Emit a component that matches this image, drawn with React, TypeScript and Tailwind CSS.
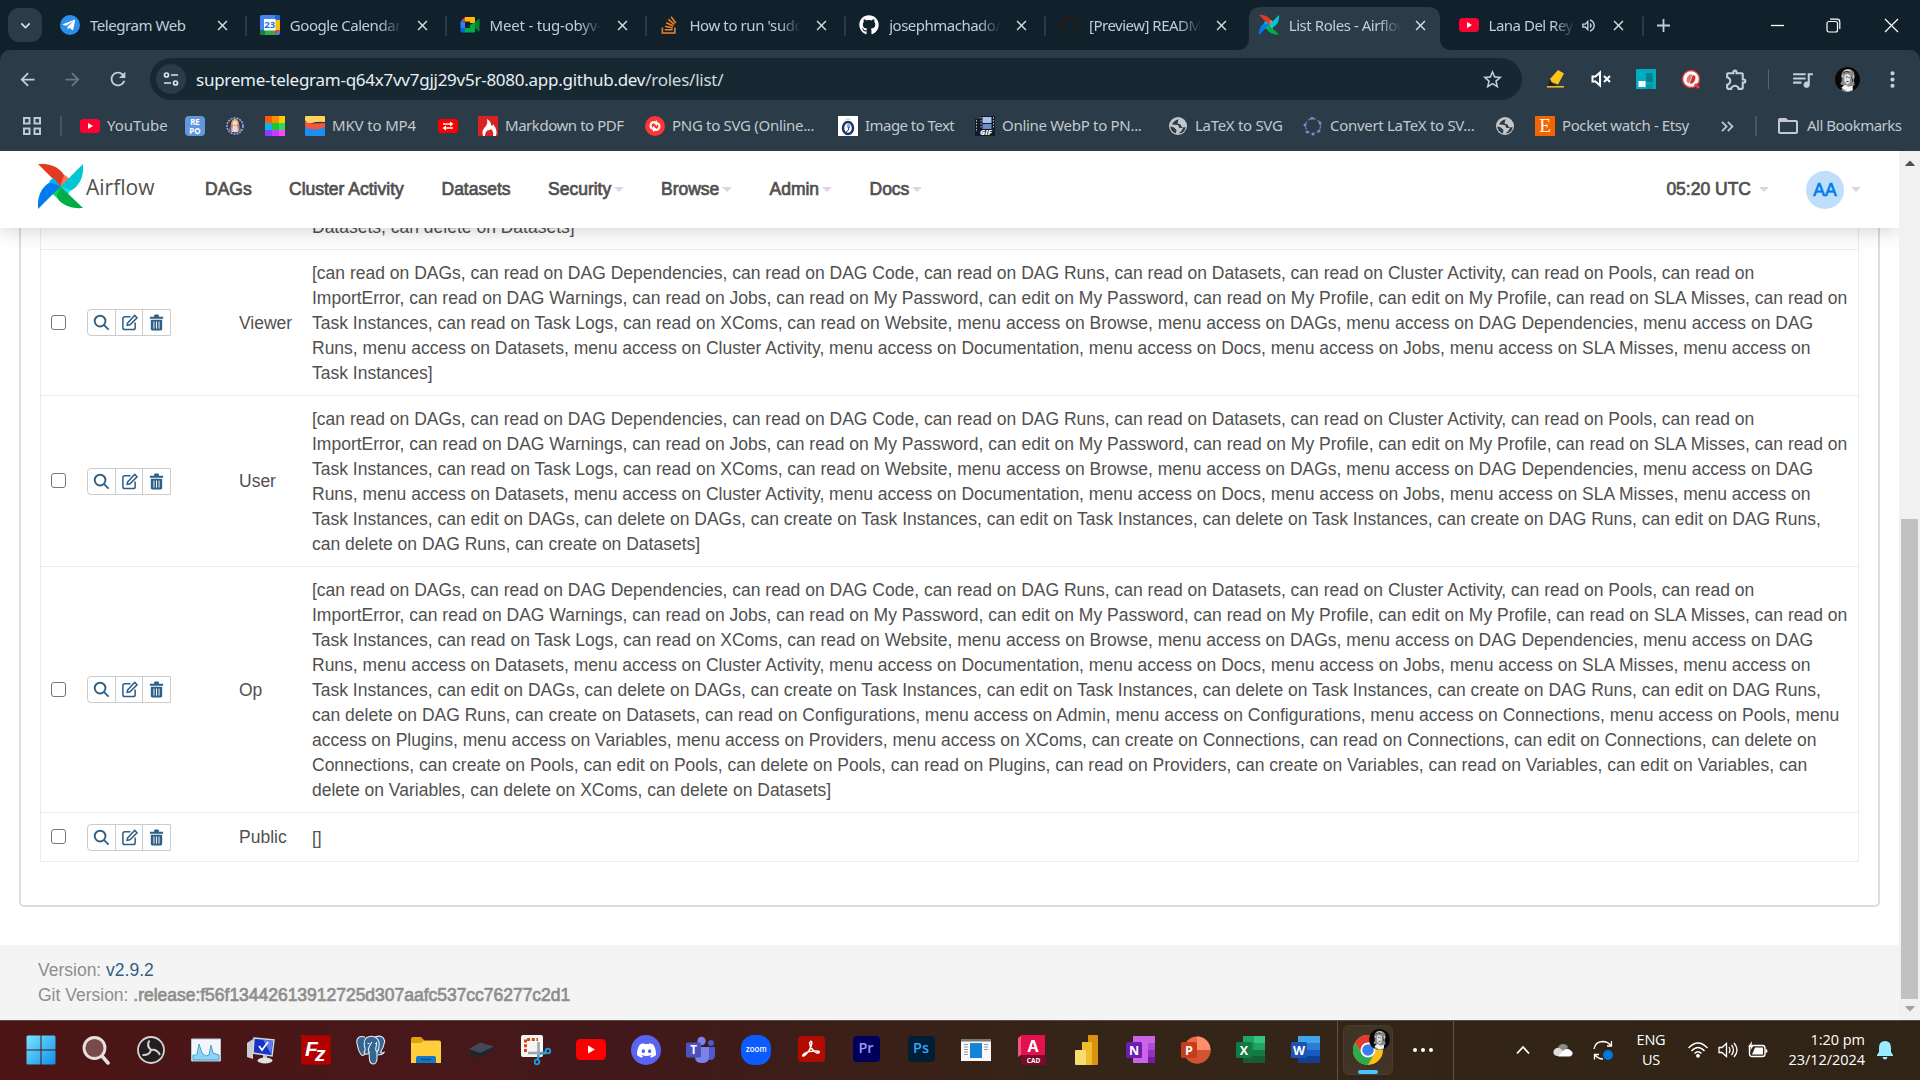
import React from "react";
import { FaGithub, FaTelegramPlane, FaStackOverflow, FaCaretDown, FaCaretUp } from "react-icons/fa";
import { SiDiscord } from "react-icons/si";
import {
  MdArrowBack,
  MdArrowForward,
  MdRefresh,
  MdStarBorder,
  MdOutlineExtension,
  MdQueueMusic,
  MdMoreVert,
  MdFolderOpen,
  MdClose,
  MdKeyboardArrowDown,
  MdKeyboardDoubleArrowRight,
  MdOutlineVolumeUp,
} from "react-icons/md";

const AirflowMark = ({ className }: { className: string }) => (
  <svg viewBox="0 0 46 46" className={className}>
    <path d="M0 0C12-1 22 3 27 12c2 4 0 8-4 11L0 0Z" fill="#e43921" />
    <path d="M27 11c3 2 5 4 5 5L23 23c1-4 2-8 4-12Z" fill="#ff7557" />
    <path d="M46 0c1 12-3 22-12 27-4 1-8 0-11-4L46 0Z" fill="#00c7d4" />
    <path d="M33 27c-2 4-4 6-5 7l-5-11c4 1 7 2 10 4Z" fill="#11e1ee" />
    <path d="M46 45c-12 1-22-3-27-11-1-5 0-8 4-11l23 22Z" fill="#00ad46" />
    <path d="M19 34c-3-2-5-4-6-5l10-6c-2 3-3 7-4 11Z" fill="#04d659" />
    <path d="M0 46c-1-12 3-22 12-27 5-1 8 0 11 4L0 46Z" fill="#017cee" />
    <path d="M11 19c1-2 3-4 5-5l7 9c-4-2-8-3-12-4Z" fill="#00b3ee" />
  </svg>
);

const YouTubeIcon = ({ className }: { className: string }) => (
  <svg viewBox="0 0 20 14" className={className}>
    <rect width="20" height="14" rx="3.500" fill="#ff0033" />
    <path d="M8 4l5 3-5 3z" fill="#fff" />
  </svg>
);

const CalendarIcon = () => (
  <svg viewBox="0 0 20 20" className="size-5">
    <rect width="20" height="20" rx="2" fill="#4285f4" />
    <path d="M15 5h5v10h-5z" fill="#fbbc04" />
    <path d="M5 15h10v5H5z" fill="#34a853" />
    <path d="M0 15h5v5H2q-2 0-2-2z" fill="#188038" />
    <path d="M15 0h3q2 0 2 2v3h-5z" fill="#1967d2" />
    <path d="M15 15h5l-5 5z" fill="#ea4335" />
    <path d="M4 4h11.500v11.500H4z" fill="#fff" />
    <text x="9.700" y="13.300" fontSize="9.500" fontWeight="700" textAnchor="middle" fill="#1a73e8" fontFamily="Open Sans, sans-serif">23</text>
  </svg>
);

const MeetIcon = () => (
  <svg viewBox="0 0 20 20" className="size-5">
    <path d="M5 2h9q1 0 1 1v5h-5V6.500H5z" fill="#ffba00" />
    <path d="M5 2v4.500H.5z" fill="#ea4335" />
    <path d="M.5 6.500H5V13H.5z" fill="#2684fc" />
    <path d="M.5 13H5v4.500H2q-1.500 0-1.500-1.500z" fill="#0066da" />
    <path d="M5 13h5v-3l5-3v9.500q0 1-1 1H5z" fill="#00ac47" />
    <path d="M15 7l3.500-3q1-.5 1 .5v11q0 1-1 .5L15 13z" fill="#00832d" />
  </svg>
);

const TelegramIcon = () => (
  <span className="flex size-5 items-center justify-center rounded-full bg-[#2a8fe8] text-white">
    <FaTelegramPlane className="mr-0.5 size-3.5" />
  </span>
);

const Portrait = ({ className }: { className: string }) => (
  <svg viewBox="0 0 24 24" className={className}>
    <circle cx="12" cy="12" r="12" fill="#080808" />
    <path d="M6 8q1-6 7-6 6 1 6 7l-1 4 1 4-3 2 1 4-6 1.500-5-2 2-5-3-1 2-4-1-3z" fill="#8b8b8b" />
    <path d="M9 8q4-3 6 1l-1 6-2 2-3-3z" fill="#e0e0e0" />
    <path d="M6 20l4-3 3 2 4-1v4l-5 1.500z" fill="#f4f4f4" />
    <path d="M8 6l2-2 4 1M16 9l1 5M7 10l-1 3M10.500 9.500h1.500M13 10h1M11 14h2" stroke="#333" fill="none" />
    <path d="M9 4q3-2 6 0M18 8l-1 3M7 8l1 2" stroke="#ddd" fill="none" />
  </svg>
);

const tabs = [
  { title: "Telegram Web", icon: <TelegramIcon />, cls: "tracking-[-0.45px]" },
  { title: "Google Calendar", icon: <CalendarIcon />, cls: "tracking-[-0.45px]" },
  { title: "Meet - tug-obyv-p", icon: <MeetIcon />, cls: "tracking-[-0.2px]" },
  { title: "How to run 'sudo", icon: <FaStackOverflow className="size-5 text-[#f48024]" />, cls: "tracking-[-0.4px]" },
  { title: "josephmachado/b", icon: <FaGithub className="size-5 text-white" />, cls: "tracking-[-0.5px]" },
  { title: "[Preview] READM", icon: <FaGithub className="size-5 text-[#211c1c]" />, cls: "tracking-[-0.5px]" },
  { title: "List Roles - Airflow", icon: <AirflowMark className="size-5" />, active: true, cls: "tracking-[-0.45px]" },
  { title: "Lana Del Rey", icon: <YouTubeIcon className="w-5" />, audio: true, cls: "tracking-[-0.5px]" },
];

function TabStrip() {
  return (
    <div className="flex h-[50px] shrink-0 items-center bg-[#10212c] text-[#c0cedb]">
      <div className="ml-2 flex h-[34px] w-[34px] items-center justify-center rounded-[11px] bg-[#2b3b47]">
        <MdKeyboardArrowDown className="size-[19px] text-[#dfe7ee]" />
      </div>
      <div className="ml-[6px] flex h-full">
        {tabs.map((t, i) => (
          <div key={t.title} className="relative flex h-full w-[199.800px] shrink-0 items-center pl-3">
            {t.active && (
              <svg className="absolute top-[7px] left-[-10px] h-[43px] w-[215px]" viewBox="0 0 216 43" preserveAspectRatio="none">
                <path d="M0 43c8 0 12-4 12-12V12c0-8 4-12 12-12h168c8 0 12 4 12 12v19c0 8 4 12 12 12z" fill="#2b3b47" />
              </svg>
            )}
            <div className="relative flex w-5 shrink-0 justify-center">{t.icon}</div>
            <div
              className={`relative ml-2.5 shrink-0 overflow-hidden text-[15px] whitespace-nowrap ${t.audio ? "w-[86px] mask-r-from-75%" : i === 0 ? "w-[112px]" : "w-[112px] mask-r-from-80%"}`}
            >
              <span className={t.cls}>{t.title}</span>
            </div>
            {t.audio && <MdOutlineVolumeUp className="relative ml-[5px] size-[17px]" />}
            <MdClose className={`relative size-[17px] shrink-0 text-[#d5dfe7] ${t.audio ? "ml-[13px]" : t.active ? "ml-[11px]" : "ml-3"}`} />
            {i !== 5 && i !== 6 && (
              <span className={`absolute top-4 h-5 w-[2px] rounded bg-[#2b3b47] ${t.audio ? "left-[195px]" : "left-[197px]"}`} />
            )}
          </div>
        ))}
      </div>
      <svg className="ml-[10px] size-[15px]" viewBox="0 0 15 15">
        <path d="M7.500 1v13M1 7.500h13" stroke="#c0cedb" strokeWidth="1.800" />
      </svg>
      <div className="ml-auto flex items-center">
        <svg className="mr-[41px] size-[15px]" viewBox="0 0 15 15"><path d="M1 7.500h13" stroke="#fff" strokeWidth="1.300" /></svg>
        <svg className="mr-[43px] size-[15px]" viewBox="0 0 15 15">
          <rect x="1" y="3.500" width="10.500" height="10.500" rx="2" fill="none" stroke="#fff" strokeWidth="1.200" />
          <path d="M4 1.200h7q2.800 0 2.800 2.800v7" fill="none" stroke="#fff" strokeWidth="1.200" />
        </svg>
        <svg className="mr-[21px] size-[15px]" viewBox="0 0 15 15"><path d="M1 1l13 13M14 1L1 14" stroke="#fff" strokeWidth="1.200" /></svg>
      </div>
    </div>
  );
}

function Toolbar() {
  return (
    <div className="flex h-[58px] shrink-0 items-center rounded-t-[10px] bg-[#2b3b47] text-[#c3d0db]">
      <MdArrowBack className="ml-[17px] size-[21px]" />
      <MdArrowForward className="ml-[24px] size-[21px] text-[#6b7984]" />
      <MdRefresh className="ml-[24px] size-[22px]" />
      <div className="ml-[21px] flex h-[42px] w-[1372px] items-center rounded-full bg-[#182832]">
        <span className="ml-[6px] flex size-[30px] items-center justify-center rounded-full bg-[#2b3b47]">
          <svg viewBox="0 0 16 16" className="size-4 fill-none stroke-[#dbe4eb] stroke-[1.700]">
            <circle cx="3.500" cy="4" r="2" />
            <path d="M8 4h7M1 12h7" />
            <circle cx="12.500" cy="12" r="2" />
          </svg>
        </span>
        <span className="ml-[10px] pt-px font-[Noto_Sans] text-[17px] tracking-[-0.26px] whitespace-nowrap text-[#e9eff3]">
          supreme-telegram-q64x7vv7gjj29v5r-8080.app.github.dev<span className="text-[#d0d8de]">/roles/list/</span>
        </span>
        <MdStarBorder className="mr-[18px] ml-auto size-[23px]" />
      </div>
      <svg viewBox="0 0 20 20" className="ml-[24px] size-5">
        <path d="M12 1l6 3.500-6 11L5 13 4 10z" fill="#fbc618" />
        <path d="M4 10l2.500 5 4 1-2 2H1.500z" fill="#222" />
        <path d="M1 17.800h17" stroke="#fbc618" strokeWidth="1.500" />
      </svg>
      <svg viewBox="0 0 20 20" className="ml-[25px] size-5">
        <path d="M1.500 7.500h3L9 3.500v13l-4.500-4h-3z" fill="none" stroke="#fff" strokeWidth="2" />
        <path d="M13 7l6 6M19 7l-6 6" stroke="#fff" strokeWidth="2" />
      </svg>
      <svg viewBox="0 0 20 20" className="ml-[25px] size-5">
        <path d="M0 0h20v20H0z" fill="#00acc1" />
        <path d="M10 4h7v9h-7z" fill="#00838f" />
        <path d="M17 13v7H10v-4z" fill="#0097a7" />
        <path d="M2.500 12h7v6h-7z" fill="#fff" />
      </svg>
      <svg viewBox="0 0 20 20" className="ml-[25px] size-5">
        <circle cx="10" cy="10" r="8.500" fill="#fff" stroke="#e53935" strokeWidth="1.500" />
        <path d="M14 15l4 4" stroke="#e53935" strokeWidth="3" />
        <path d="M5.500 11q0-3 3-5.500h3l-2 5-1.500 3.500q-2.500 0-2.500-3z" fill="#e57373" />
        <path d="M14.500 9q0 3-3 5.500h-3l2-5L12 6q2.500 0 2.500 3z" fill="#d32f2f" />
      </svg>
      <MdOutlineExtension className="ml-[23px] size-[25px]" />
      <span className="ml-[19px] h-5 w-px bg-[#53646f]" />
      <MdQueueMusic className="ml-[21px] size-[25px]" />
      <Portrait className="ml-[20px] size-[25px]" />
      <MdMoreVert className="ml-[20px] size-[25px]" />
    </div>
  );
}

const RepoIcon = () => (
  <span className="flex size-5 flex-col items-center justify-center rounded-sm bg-[#6197dc] text-[8px] leading-[9px] font-bold text-white">
    <span className="h-[9px]">RE</span>
    <span className="h-[9px]">PO</span>
  </span>
);

const LibreIcon = () => (
  <svg viewBox="0 0 20 20" className="size-5">
    <circle cx="10" cy="10" r="8" fill="#3b2b55" stroke="#9db6e8" strokeWidth="1.500" strokeDasharray="2 1" />
    <path d="M10 2.500q4 1 4 6l2 6q-6 4-12 0l2-6q0-5 4-6z" fill="#c9a04b" />
    <circle cx="10" cy="7" r="2.500" fill="#f4d6c8" />
    <path d="M8 10h4l1 6H7z" fill="#e9d3e9" />
    <path d="M6 9l-1 7M14 9l1 7" stroke="#4654c7" />
  </svg>
);

const PixelIcon = () => (
  <svg viewBox="0 0 20 20" className="size-5">
    <path d="M0 0h7v7H0z" fill="#ff5a00" /><path d="M7 0h7v7H7z" fill="#ff8c00" /><path d="M14 0h6v7h-6z" fill="#ffcc00" />
    <path d="M0 7h7v7H0z" fill="#10b4e8" /><path d="M7 7h7v7H7z" fill="#18c830" /><path d="M14 7h6v7h-6z" fill="#30dc60" />
    <path d="M0 14h7v6H0z" fill="#8c3cff" /><path d="M7 14h7v6H7z" fill="#c83cff" /><path d="M14 14h6v6h-6z" fill="#ff46ff" />
  </svg>
);

const WaveIcon = () => (
  <svg viewBox="0 0 20 20" className="size-5">
    <path d="M1 0h18q1 0 1 1v5q-8-1-13 1T0 4V1q0-1 1-1z" fill="#ffd45e" />
    <path d="M0 5q3 3 9 2.500T20 7v4q-4 3-10 3T0 12z" fill="#f5553d" />
    <path d="M0 10q4 4 10 3.500T20 11v8q0 1-1 1H1q-1 0-1-1z" fill="#1e8ef0" />
  </svg>
);

const SwapIcon = () => (
  <svg viewBox="0 0 20 20" className="size-5">
    <rect y="3" width="20" height="14" rx="3.500" fill="#f00" />
    <path d="M5 8h9M15 12H6" stroke="#fff" strokeWidth="1.500" />
    <path d="M12 5.500L15.500 8 12 10.500zM8 9.500L4.500 12 8 14.500z" fill="#fff" />
  </svg>
);

const FlameIcon = () => (
  <svg viewBox="0 0 20 20" className="size-5">
    <path d="M0 0h20v20H0z" fill="#da2222" />
    <path d="M5 20Q3 14 8 10q2-3 1-7 4 2 4 6l1 1q1-1 1-2 5 6 3 12h-3q1-4-2-7-2 2-3 1-3 2-3 6z" fill="#fff" />
  </svg>
);

const ConvertIcon = () => (
  <svg viewBox="0 0 20 20" className="size-5">
    <circle cx="10" cy="10" r="10" fill="#ff3535" />
    <path d="M11.500 6.500Q6 5 5.500 9.500q0 3.500 4 3.500M8.500 13.500Q14 15 14.500 10.500 14.500 7 10.500 7" fill="none" stroke="#fff" strokeWidth="2.200" />
    <path d="M8 10v6l3.500-3zM12 10V4L8.500 7z" fill="#fff" />
  </svg>
);

const OcrIcon = () => (
  <svg viewBox="0 0 20 20" className="size-5">
    <path d="M0 0h20v20H0z" fill="#fff" />
    <ellipse cx="10" cy="12" rx="5" ry="6" fill="none" stroke="#1c3468" strokeWidth="2.500" />
    <circle cx="10.500" cy="10" r="2" fill="#8fa9ce" />
    <path d="M11 11q0 4-3 5" stroke="#1c3468" fill="none" />
    <path d="M7 4q3-4 6 0z" fill="#d7d9dd" />
  </svg>
);

const GifIcon = () => (
  <svg viewBox="0 0 20 20" className="size-5">
    <path d="M0 3h5v17H0zM5 0h15v20H5z" fill="#111a28" />
    <path d="M7.500 1h9v6h-9z" fill="#a8c4ee" /><path d="M7.500 8h9v5h-9z" fill="#6d8cc4" />
    <path d="M6 1v12M18.500 1v12M1.500 4v12" stroke="#bbb" strokeDasharray="1.500 1.500" />
    <text x="11" y="19" fontSize="7.500" fontWeight="800" fontStyle="italic" textAnchor="middle" fill="#fff" fontFamily="Open Sans, sans-serif">GIF</text>
  </svg>
);

const Globe = () => (
  <svg viewBox="0 0 20 20" className="size-5">
    <circle cx="10" cy="10" r="9" fill="#c3c7ca" />
    <path d="M10.500 3.200Q6 4 4 8.500l6 .5 1.500 3H15q-1 3.500-4.500 5.200 6 .3 7.200-6-1.700-.2-3.700.3l-1.500-3-3-1z" fill="#2b3b47" />
    <path d="M2.300 10.500q3 0 4.200 1.500l2 2-.5 3.300Q3 16 2.300 10.500z" fill="#2b3b47" />
  </svg>
);

const RingIcon = () => (
  <svg viewBox="0 0 20 20" className="size-5">
    <circle cx="10" cy="10" r="7.500" fill="none" stroke="#77727a" strokeWidth="1.500" strokeDasharray="3 2" />
    <g fill="#8b7cf0">
      <circle cx="9" cy="2.200" r="1.500" /><circle cx="17" cy="7" r="1.500" /><circle cx="16" cy="15" r="1.500" />
      <circle cx="10" cy="18" r="1.500" /><circle cx="4" cy="16" r="1.500" /><circle cx="2" cy="9" r="1.500" />
    </g>
  </svg>
);

const EtsyIcon = () => (
  <span className="flex size-5 items-center justify-center bg-[#f56400] font-[Liberation_Serif] text-[19px] leading-5 text-white">E</span>
);

const bookmarks: { icon: React.ReactNode; label?: string; width: string; cls?: string }[] = [
  { icon: <YouTubeIcon className="w-5" />, label: "YouTube", width: "w-[105px]", cls: "tracking-[0px]" },
  { icon: <RepoIcon />, width: "w-[40px]" },
  { icon: <LibreIcon />, width: "w-[40px]" },
  { icon: <PixelIcon />, width: "w-[40px]" },
  { icon: <WaveIcon />, label: "MKV to MP4", width: "w-[133px]", cls: "tracking-[-0.15px]" },
  { icon: <SwapIcon />, width: "w-[40px]" },
  { icon: <FlameIcon />, label: "Markdown to PDF", width: "w-[167px]", cls: "tracking-[-0.45px]" },
  { icon: <ConvertIcon />, label: "PNG to SVG (Online...", width: "w-[193px]", cls: "tracking-[-0.3px]" },
  { icon: <OcrIcon />, label: "Image to Text", width: "w-[137px]", cls: "tracking-[-0.55px]" },
  { icon: <GifIcon />, label: "Online WebP to PN...", width: "w-[193px]", cls: "tracking-[-0.3px]" },
  { icon: <Globe />, label: "LaTeX to SVG", width: "w-[135px]", cls: "tracking-[-0.3px]" },
  { icon: <RingIcon />, label: "Convert LaTeX to SV...", width: "w-[192px]", cls: "tracking-[-0.3px]" },
  { icon: <Globe />, width: "w-[40px]" },
  { icon: <EtsyIcon />, label: "Pocket watch - Etsy", width: "w-[170px]", cls: "tracking-[-0.4px]" },
];

function BookmarkBar() {
  return (
    <div className="flex h-[43px] shrink-0 items-center bg-[#2b3b47] pb-[7px] text-[15px] text-[#c3c9ce]">
      <svg viewBox="0 0 18 18" className="ml-[23px] size-[18px] fill-none stroke-[#c3c9ce] stroke-2">
        <path d="M1 1h5.500v5.500H1zM11.500 1H17v5.500h-5.500zM1 11.500h5.500V17H1zM11.500 11.500H17V17h-5.500z" />
      </svg>
      <span className="ml-[19px] h-5 w-[2px] bg-[#46555f]" />
      <div className="ml-[18px] flex">
        {bookmarks.map((b, i) => (
          <div key={i} className={`flex shrink-0 items-center gap-[7px] whitespace-nowrap ${b.width}`}>
            {b.icon}
            {b.label && <span className={`-mt-[2px] ${b.cls}`}>{b.label}</span>}
          </div>
        ))}
      </div>
      <MdKeyboardDoubleArrowRight className="ml-[12px] size-[21px]" />
      <span className="ml-[17px] h-5 w-[2px] bg-[#46555f]" />
      <MdFolderOpen className="ml-[19px] size-[24px]" />
      <span className="-mt-[2px] ml-[7px] tracking-[-0.5px] whitespace-nowrap">All Bookmarks</span>
    </div>
  );
}

const Caret = ({ className }: { className: string }) => (
  <span className={`size-0 border-x-[5px] border-t-[5px] border-x-transparent border-t-[#e2d2e2] ${className}`} />
);

const nav = [
  { label: "DAGs", width: "w-[84px]" },
  { label: "Cluster Activity", width: "w-[152.500px]" },
  { label: "Datasets", width: "w-[106.500px]" },
  { label: "Security", width: "w-[113px]", caret: true },
  { label: "Browse", width: "w-[108.500px]", caret: true },
  { label: "Admin", width: "w-[100px]", caret: true },
  { label: "Docs", width: "w-[60px]", caret: true },
];

function NavBar() {
  return (
    <header className="relative z-10 flex h-[77px] shrink-0 items-center bg-white pl-[38px] text-[17.500px] text-[#51504f] shadow-[0_0_22px_rgba(0,0,0,0.22)]">
      <AirflowMark className="h-[45px] w-[45px] -translate-y-[3px]" />
      <span className="ml-[3px] w-[116px] -translate-y-[2px] font-[Open_Sans] text-[21px]">Airflow</span>
      <nav className="ml-[3px] flex">
        {nav.map((n) => (
          <div key={n.label} className={`flex items-center whitespace-nowrap ${n.width}`}>
            <span className="[-webkit-text-stroke:0.7px_#51504f]">{n.label}</span>
            {n.caret && <Caret className="ml-[3px]" />}
          </div>
        ))}
      </nav>
      <div className="mr-[38px] ml-auto flex items-center">
        <span className="[-webkit-text-stroke:0.7px_#51504f]">05:20 UTC</span>
        <Caret className="ml-[8px]" />
        <span className="mt-px ml-[37px] flex size-[38px] items-center justify-center rounded-full bg-[#bfdefb] pt-px text-[17.500px] text-[#017cee] [-webkit-text-stroke:0.7px_#017cee]">
          AA
        </span>
        <Caret className="ml-[7px]" />
      </div>
    </header>
  );
}

const baseLines = [
  "[can read on DAGs, can read on DAG Dependencies, can read on DAG Code, can read on DAG Runs, can read on Datasets, can read on Cluster Activity, can read on Pools, can read on",
  "ImportError, can read on DAG Warnings, can read on Jobs, can read on My Password, can edit on My Password, can read on My Profile, can edit on My Profile, can read on SLA Misses, can read on",
  "Task Instances, can read on Task Logs, can read on XComs, can read on Website, menu access on Browse, menu access on DAGs, menu access on DAG Dependencies, menu access on DAG",
  "Runs, menu access on Datasets, menu access on Cluster Activity, menu access on Documentation, menu access on Docs, menu access on Jobs, menu access on SLA Misses, menu access on",
];
const userLine =
  "Task Instances, can edit on DAGs, can delete on DAGs, can create on Task Instances, can edit on Task Instances, can delete on Task Instances, can create on DAG Runs, can edit on DAG Runs,";

const roles = [
  { name: "Viewer", height: "h-[146px]", lines: [...baseLines, "Task Instances]"] },
  { name: "User", height: "h-[171px]", lines: [...baseLines, userLine, "can delete on DAG Runs, can create on Datasets]"] },
  {
    name: "Op",
    height: "h-[246px]",
    lines: [
      ...baseLines,
      userLine,
      "can delete on DAG Runs, can create on Datasets, can read on Configurations, menu access on Admin, menu access on Configurations, menu access on Connections, menu access on Pools, menu",
      "access on Plugins, menu access on Variables, menu access on Providers, menu access on XComs, can create on Connections, can read on Connections, can edit on Connections, can delete on",
      "Connections, can create on Pools, can edit on Pools, can delete on Pools, can read on Plugins, can read on Providers, can create on Variables, can read on Variables, can edit on Variables, can",
      "delete on Variables, can delete on XComs, can delete on Datasets]",
    ],
  },
  { name: "Public", height: "h-[49px]", lines: ["[]"] },
];

const SearchIcon = () => (
  <svg viewBox="0 0 18 18" className="size-[17px] fill-none stroke-[#2f5f85] stroke-2">
    <circle cx="7.500" cy="7.500" r="5.700" />
    <path d="M11.500 11.500L16.500 16.500" />
  </svg>
);
const EditIcon = () => (
  <svg viewBox="0 0 18 18" className="size-[17px] fill-none stroke-[#2f5f85] stroke-[1.600]">
    <path d="M10 3H4Q2 3 2 5v9.500q0 2 2 2h9q2 0 2-2V9" />
    <path d="M7 9.500L14.500 1.500 17 4 9.500 11.500 6.500 12z" />
  </svg>
);
const TrashIcon = () => (
  <svg viewBox="0 0 18 18" className="size-[17px]">
    <path d="M2 3h4.500V1.500q0-1 1-1h3q1 0 1 1V3H16v2H2zM3 6h12v10q0 1.500-1.500 1.500h-9Q3 17.500 3 16z" fill="#2f5f85" />
    <path d="M6.300 8v7.500M9 8v7.500M11.700 8v7.500" stroke="#fff" strokeWidth="1" />
  </svg>
);

function RoleRow({ role }: { role: (typeof roles)[number] }) {
  return (
    <div className={`flex shrink-0 items-center border-b border-[#ececec] ${role.height}`}>
      <span className="-mt-px ml-[10px] size-[15px] rounded-[3px] border border-[#767676] bg-white" />
      <div className="ml-[21px] flex h-[27px] w-[84px] divide-x divide-[#ccc] rounded-l border border-[#ccc]">
        <span className="flex flex-1 items-center justify-center"><SearchIcon /></span>
        <span className="flex flex-1 items-center justify-center"><EditIcon /></span>
        <span className="flex flex-1 items-center justify-center"><TrashIcon /></span>
      </div>
      <span className="ml-[68px] w-[73px] pt-px">{role.name}</span>
      <div className="pt-[2px] leading-[25px] whitespace-nowrap">
        {role.lines.map((l) => (
          <div key={l}>{l}</div>
        ))}
      </div>
    </div>
  );
}

function Page() {
  return (
    <div className="flex h-[869px] shrink-0 bg-white font-[Liberation_Sans] text-[17.500px] text-[#51504f]">
      <div className="flex w-[1899px] shrink-0 flex-col overflow-hidden">
        <NavBar />
        <div className="mx-[19px] h-[679px] shrink-0 rounded-b-[5px] border-x-2 border-b-2 border-[#ddd] px-[19px]">
          <div className="flex flex-col border-x border-[#ececec]">
            <div className="flex h-[22px] items-end overflow-hidden border-b border-[#ececec] pb-[9px] pl-[271px]">
              <span className="leading-[25px] whitespace-nowrap">Datasets, can delete on Datasets]</span>
            </div>
            {roles.map((r) => (
              <RoleRow key={r.name} role={r} />
            ))}
          </div>
        </div>
        <footer className="mt-auto flex h-[75px] shrink-0 flex-col justify-center bg-[#f4f4f4] pl-[38px] leading-[25px] text-[#8e8e8d]">
          <div>Version: <span className="text-[#2f5f85]">v2.9.2</span></div>
          <div>
            Git Version: <span className="tracking-[-0.02px] [-webkit-text-stroke:0.7px_#8e8e8d]">.release:f56f13442613912725d307aafc537cc76277c2d1</span>
          </div>
        </footer>
      </div>
      <div className="flex flex-1 flex-col items-center bg-[#f1f1f1]">
        <FaCaretUp className="mt-[4px] size-4 shrink-0 text-[#505050]" />
        <div className="mt-[348px] h-[480px] w-[17px] shrink-0 bg-[#c1c1c1]" />
        <FaCaretDown className="mt-[1px] size-4 shrink-0 text-[#a3a3a3]" />
      </div>
    </div>
  );
}

const OfficeIcon = ({ letter, badge, children }: { letter: string; badge: string; children: React.ReactNode }) => (
  <svg viewBox="0 0 30 30" className="size-[30px]">
    {children}
    <rect x="0" y="7" width="16" height="16" rx="1.500" fill={badge} />
    <text x="8" y="19.500" fontSize="12.500" fontWeight="700" textAnchor="middle" fill="#fff" fontFamily="Open Sans, sans-serif">{letter}</text>
  </svg>
);

const AdobeTile = ({ label, cls }: { label: string; cls: string }) => (
  <span className={`mb-[3px] flex h-[26px] w-[27px] items-center justify-center rounded-[4px] pb-px text-[14.500px] font-semibold ${cls}`}>{label}</span>
);

const taskIcons: React.ReactNode[] = [
  <svg viewBox="0 0 30 30" className="size-[30px]">
    <defs><linearGradient id="win" x1="0" y1="0" x2="1" y2="1"><stop stopColor="#79e5fb" /><stop offset="1" stopColor="#0e8ff0" /></linearGradient></defs>
    <path d="M2 .5h12.500v14H.5V2Q.5.500 2 .5zM15.500.5H28q1.500 0 1.500 1.500v12.500h-14zM.5 15.500h14v14H2Q.5 29.500.5 28zM15.500 15.500h14V28q0 1.500-1.500 1.500H15.500z" fill="url(#win)" />
  </svg>,
  <svg viewBox="0 0 30 30" className="size-[30px]">
    <circle cx="13.500" cy="13" r="10.500" fill="#7a4a4a" stroke="#e6e2e2" strokeWidth="2.800" />
    <path d="M21 21l6 7" stroke="#e6e2e2" strokeWidth="3.500" strokeLinecap="round" />
  </svg>,
  <svg viewBox="0 0 30 30" className="size-[30px]">
    <circle cx="15" cy="15" r="13" fill="#231f20" stroke="#d5d3d3" strokeWidth="1.800" />
    <path d="M13.500 5.500q-3.500 5 1.500 9.500M15 15q6-1 9 5M15 15q-1.500 5.500-8.500 5" stroke="#d5d3d3" strokeWidth="2" fill="none" />
  </svg>,
  <svg viewBox="0 0 30 30" className="size-[30px]">
    <path d="M.5 4h29v22H.5z" fill="#f3f6f8" stroke="#b9c7cf" />
    <path d="M2 20q3 1 4-1l2-10 3 9 4 3 3-1 2-10 2 8 6 2v5H2z" fill="#8fd2f2" stroke="#3fa5dd" />
  </svg>,
  <svg viewBox="0 0 30 30" className="size-[30px]">
    <path d="M1 8l6-4v20l-6-2z" fill="#c9cdd0" />
    <path d="M8 3l20 2-2 16-19-3z" fill="#1533c8" stroke="#d7dadd" strokeWidth="1.500" />
    <path d="M17 4.500l10 1.500-2 13z" fill="#5c7cf0" />
    <path d="M13 11l3 4 6-8" stroke="#fff" strokeWidth="1.700" fill="none" />
    <path d="M17 20h4v5h-4z" fill="#c3c7ca" />
    <ellipse cx="19" cy="25.500" rx="7.500" ry="3" fill="#dfe2e4" />
  </svg>,
  <svg viewBox="0 0 30 30" className="size-[30px]">
    <rect x="1" y="1" width="28" height="28" fill="#b30000" stroke="#b30000" strokeWidth="2" strokeDasharray="2 1" />
    <text x="4" y="21" fontSize="21" fontWeight="700" fontStyle="italic" fill="#fff" fontFamily="Liberation Sans, sans-serif">F</text>
    <text x="14" y="26" fontSize="21" fontWeight="700" fontStyle="italic" fill="#fff" fontFamily="Liberation Sans, sans-serif">z</text>
  </svg>,
  <svg viewBox="0 0 30 30" className="size-[30px] stroke-[#e7edf2] stroke-[1.100]">
    <path d="M9 2q-8-2-8.200 5Q2 16 5.500 20q2 1 3.500-1l2-2M19 2q8-3 9.700 4-.7 6-4.200 11 2 2 4-.2-1.500 3.200-7 3.200" fill="#336791" />
    <path d="M10 3q4-3 9-1 5 3 4 9 0 4-2 6v7q-.5 5-4 5-3.500-.5-3.500-5l-.500-6q-4 3-5-1 1.500-1 1-4Q7 7 10 3z" fill="#336791" />
    <path d="M13.500 18q-2-3-.5-6t3-5M21 17q-2-2-1-5t.500-5" fill="none" />
    <path d="M11.500 8.500h2M19 8.500h1.500" fill="none" />
  </svg>,
  <svg viewBox="0 0 30 30" className="size-[30px]">
    <path d="M0 4q0-2 2-2h8l3 3v5H0z" fill="#e0a010" />
    <path d="M0 8h10l3-2.500h15q2 0 2 2V28H0z" fill="#ffce3d" />
    <path d="M5 28v-5q0-2 2-2h16q2 0 2 2v5z" fill="#1378c8" />
    <path d="M10 24.500h10" stroke="#0b4f8c" strokeWidth="1.500" />
  </svg>,
  <svg viewBox="0 0 30 30" className="size-[30px]">
    <path d="M3 14l11-6.500 14 4-1 4-14 7.500-8-3z" fill="#22242c" />
    <path d="M3 14l11-6.500 14 4-14 6.500z" fill="#454855" />
  </svg>,
  <svg viewBox="0 0 30 30" className="size-[30px]">
    <rect width="22" height="22" rx="2" fill="#f5f5f5" />
    <path d="M4.500 17V4.500H17" stroke="#d6430f" strokeWidth="3" strokeDasharray="3 1.700" fill="none" />
    <path d="M17.500 7v16M7 18h18" stroke="#9aa5ae" strokeWidth="2.500" fill="none" />
    <circle cx="27" cy="16" r="2.300" fill="none" stroke="#1ba0e2" strokeWidth="1.800" />
    <circle cx="16" cy="27" r="2.300" fill="none" stroke="#1ba0e2" strokeWidth="1.800" />
    <path d="M19 19l6-2M17.500 20l-1 5" stroke="#1ba0e2" strokeWidth="2" />
  </svg>,
  <svg viewBox="0 0 30 22" className="h-[22px] w-[30px]"><rect width="30" height="21" rx="4.500" fill="#f00" /><path d="M12 6.500l7 4-7 4z" fill="#fff" /></svg>,
  <span className="flex size-[30px] items-center justify-center rounded-full bg-[#5865f2] text-white"><SiDiscord className="size-[19px]" /></span>,
  <svg viewBox="0 0 30 30" className="size-[30px]">
    <circle cx="25" cy="8" r="3" fill="#5059c9" /><circle cx="15.500" cy="6" r="4.200" fill="#7b83eb" />
    <path d="M20 12h9v8q0 5-5 5-4 0-4-4z" fill="#5059c9" />
    <path d="M9 12h14v10q0 6-7 6t-7-6z" fill="#7b83eb" />
    <rect y="7.500" width="15" height="15" rx="1.500" fill="#4b53bc" />
    <text x="7.500" y="19" fontSize="11.500" fontWeight="700" textAnchor="middle" fill="#fff" fontFamily="Open Sans, sans-serif">T</text>
  </svg>,
  <span className="flex size-[30px] items-center justify-center rounded-[13px] bg-[#0b5cff] pb-0.5 font-[Inter] text-[8px] font-medium text-white">zoom</span>,
  <span className="mb-[3px] flex h-[26px] w-[27px] items-center justify-center rounded-[4px] bg-[#b30b00] text-white">
    <svg viewBox="0 0 20 20" className="size-5">
      <path d="M9 2.500q3-1 1 5T2.500 17q-2 0 1-2.500T16 12q3 0 2 1.500t-5-1.500T8.500 3" fill="none" stroke="#fff" strokeWidth="1.600" />
    </svg>
  </span>,
  <AdobeTile label="Pr" cls="bg-[#00005b] text-[#9999ff]" />,
  <AdobeTile label="Ps" cls="bg-[#001e36] text-[#31a8ff]" />,
  <svg viewBox="0 0 30 30" className="size-[30px]">
    <path d="M0 4h30v22H0z" fill="#f8f8f8" /><path d="M0 4h30v2.500H0z" fill="#777" />
    <path d="M9 8h12v15H9z" fill="#1583d8" />
    <path d="M3 9.500h4M3 12h4M3 14.500h4M3 17h4M3 19.500h4M23 9.500h4M23 12h4M23 14.500h4" stroke="#999" />
  </svg>,
  <svg viewBox="0 0 30 30" className="size-[30px]">
    <path d="M2 3l4-3v19l-4 3z" fill="#f2567c" />
    <path d="M5 0h23q1 0 1 1v20H5z" fill="#e51050" /><path d="M5 20h25v9q0 1-1 1H6q-1 0-1-1z" fill="#7a0a2c" />
    <text x="17" y="16.500" fontSize="16" fontWeight="700" textAnchor="middle" fill="#fff" fontFamily="Open Sans, sans-serif">A</text>
    <text x="17.500" y="28" fontSize="6.500" fontWeight="700" textAnchor="middle" fill="#fff" fontFamily="Open Sans, sans-serif">CAD</text>
  </svg>,
  <svg viewBox="0 0 30 30" className="size-[30px]">
    <path d="M17 0h9q1 0 1 1v28q0 1-1 1h-9z" fill="#d89210" /><path d="M11 7h9q1 0 1 1v22H11z" fill="#eebc2c" /><path d="M5 15h9q1 0 1 1v14H5q-1 0-1-1V16q0-1 1-1z" fill="#f8dc6c" />
  </svg>,
  <OfficeIcon letter="N" badge="#6d1bb0">
    <path d="M7 1h22v27H7z" fill="#ca64ea" /><path d="M22 8h7v7h-7z" fill="#ae4bd5" /><path d="M22 15h7v7h-7z" fill="#9332bf" /><path d="M22 22h7v6h-7z" fill="#7719aa" />
  </OfficeIcon>,
  <OfficeIcon letter="P" badge="#c43e1c">
    <circle cx="16" cy="15" r="13.500" fill="#ed6c47" /><path d="M16 1.500A13.500 13.500 0 0129.500 15H16z" fill="#ff8f6b" /><path d="M2.500 15h27a13.500 13.500 0 01-27 0z" fill="#d35230" />
  </OfficeIcon>,
  <OfficeIcon letter="X" badge="#107c41">
    <path d="M7 1h11v9H7z" fill="#21a366" /><path d="M18 1h11v7H18z" fill="#33c481" /><path d="M7 8h11v7H7z" fill="#1b9058" /><path d="M18 8h11v7H18z" fill="#21a366" /><path d="M7 15h22v7H7z" fill="#107c41" /><path d="M7 21h22v7H7z" fill="#185c37" />
  </OfficeIcon>,
  <OfficeIcon letter="W" badge="#1b54b5">
    <path d="M7 1h22v7H7z" fill="#41a5ee" /><path d="M7 8h22v7H7z" fill="#2b7cd3" /><path d="M7 15h22v7H7z" fill="#185abd" /><path d="M7 21h22v7H7z" fill="#103f91" />
  </OfficeIcon>,
];

const ChromeIcon = () => (
  <svg viewBox="0 0 30 30" className="size-[30px]">
    <circle cx="15" cy="15" r="15" fill="#fbc116" />
    <path d="M2 7.500A15 15 0 0128 7.500H15L9 19z" fill="#e33b2e" />
    <path d="M2 7.500L9 19l6 3 6-3-6 11A15 15 0 012 7.500z" fill="#2da94f" />
    <circle cx="15" cy="15" r="7.500" fill="#fff" /><circle cx="15" cy="15" r="5.800" fill="#3b7ded" />
  </svg>
);

function Taskbar() {
  return (
    <div className="flex h-[60px] shrink-0 border-t border-[#5a4a44] bg-[linear-gradient(90deg,#4c1414_0%,#47181a_24%,#42181a_32%,#3a2018_46%,#342518_58%,#302416_100%)] font-[Open_Sans] text-white">
      <div className="ml-[13.500px] flex h-[58px] items-center">
        {taskIcons.map((ic, i) => (
          <div key={i} className="flex w-[55px] shrink-0 items-center justify-center">{ic}</div>
        ))}
      </div>
      <span className="ml-[3.500px] h-full w-px bg-[#5f5347]" />
      <div className="relative mt-1 ml-[5px] flex size-[50px] items-center justify-center rounded-md border border-[#4a3d30] bg-[#413426]">
        <ChromeIcon />
        <Portrait className="absolute top-[3px] left-[25px] size-[21px]" />
        <span className="absolute bottom-0 left-[14px] h-1 w-5 rounded-full bg-[#4cc2ff]" />
      </div>
      <div className="flex w-[60px] items-center justify-center gap-1 pb-px">
        <span className="size-1 rounded-full bg-white" />
        <span className="size-1 rounded-full bg-white" />
        <span className="size-1 rounded-full bg-white" />
      </div>
      <span className="h-full w-px bg-[#5f5347]" />
      <div className="flex h-[58px] flex-1 items-center">
        <svg viewBox="0 0 14 10" className="ml-[62px] h-[10px] w-[14px]"><path d="M1 8.500L7 2l6 6.500" fill="none" stroke="#fff" strokeWidth="1.800" /></svg>
        <svg viewBox="0 0 20 14" className="ml-[23px] h-[14px] w-5">
          <path d="M5 5q1-4 5-4 4 0 5 3l-4 4z" fill="#8f8a84" /><path d="M1 7q3-4 7-1l9 7H4Q-1 12 1 7z" fill="#ddd" />
          <path d="M10 8q4-4 7-1 4 2 2 5-1 1.500-3 1.500H5z" fill="#fff" />
        </svg>
        <div className="relative ml-[20px]">
          <svg viewBox="0 0 20 20" className="size-5 fill-none stroke-white stroke-[1.300]">
            <path d="M1 9Q2 2 9.500 1.500 15 1.500 18.500 6M18.500 1v5H14M1.500 19.500v-5H6M1.500 14.500Q5 19 10 19" />
          </svg>
          <span className="absolute top-[10px] left-[10px] size-[10px] rounded-full bg-[#0078d7]" />
        </div>
        <div className="ml-[17px] flex w-[42px] flex-col text-center text-[14.500px] leading-5 tracking-[-0.200px]">
          <span>ENG</span>
          <span>US</span>
        </div>
        <svg viewBox="0 0 20 16" className="ml-[16px] h-4 w-5 fill-none stroke-white stroke-[1.400]">
          <path d="M.5 6Q10-4 19.500 6M3.500 9Q10 2 16.500 9M6.500 11.500Q10 8 13.500 11.500" /><circle cx="10" cy="13.800" r="1.200" fill="#fff" />
        </svg>
        <svg viewBox="0 0 20 16" className="ml-[10px] h-4 w-5 fill-none stroke-white stroke-[1.300]">
          <path d="M1 5.500h3L8.500 1.500v13L4 10.500H1zM11 5q2 3 0 6M13.500 3q4 5 0 10M16 1q6 7 0 14" />
        </svg>
        <svg viewBox="0 0 20 16" className="ml-[10px] h-4 w-5 overflow-visible">
          <rect x="1.500" y="3.500" width="15.500" height="11" rx="2.500" fill="none" stroke="#fff" strokeWidth="1.400" />
          <path d="M7 5.500h8v7H4zM17.500 7q2 0 2 2t-2 2z" fill="#fff" /><path d="M4-1L0 5h3L2 9l4-6H3.500z" fill="#fff" />
        </svg>
        <div className="ml-auto flex w-[90px] flex-col text-right text-[14.500px] leading-5 tracking-[-0.050px] whitespace-nowrap">
          <span>1:20 pm</span>
          <span>23/12/2024</span>
        </div>
        <svg viewBox="0 0 16 20" className="mr-[27px] ml-[12px] h-5 w-4">
          <path d="M8 1q6 0 6 7v4l2 3v1H0v-1l2-3V8q0-7 6-7zM5.500 17h5Q10 19.500 8 19.500T5.500 17z" fill="#99ebff" />
        </svg>
      </div>
    </div>
  );
}

export default function App() {
  return (
    <div className="flex h-[1080px] w-[1920px] flex-col overflow-hidden bg-[#10212c] font-[Noto_Sans]">
      <TabStrip />
      <Toolbar />
      <BookmarkBar />
      <Page />
      <Taskbar />
    </div>
  );
}
